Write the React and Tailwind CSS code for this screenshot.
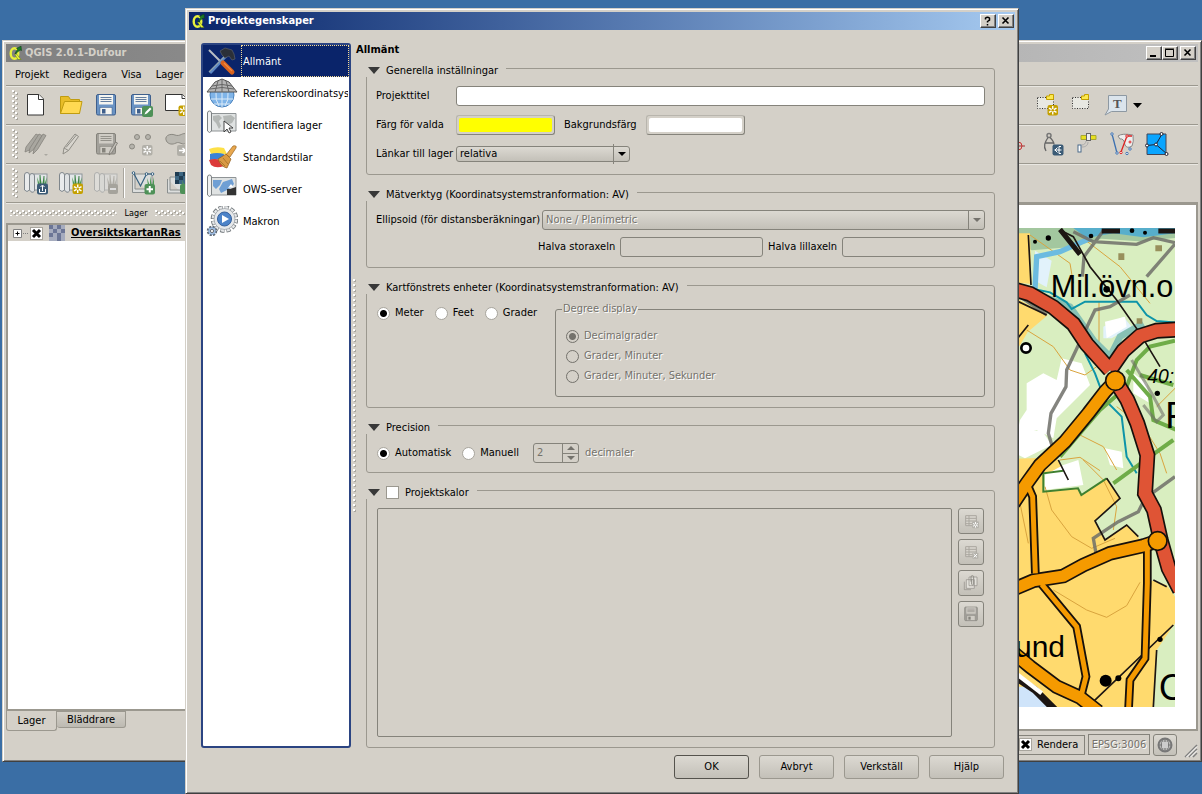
import React from 'react';
import clsx from 'clsx';

const face = 'border rounded-[3px] bg-linear-to-b from-[#dcd9d2] to-[#c3c0b8]';
const raised = 'border border-[#85837b] rounded-[3px] bg-linear-to-b from-[#dcd9d2] to-[#c3c0b8]';
const etched = 'text-[#74726c] [text-shadow:1px_1px_0_#fff]';

/* ---------- small shared pieces ---------- */

const Dots = ({ id, className, w = 6 }) => (
  <svg className={className} aria-hidden="true">
    <defs>
      <pattern id={id} width={w} height="5" patternUnits="userSpaceOnUse">
        <rect x="1" y="1" width="2" height="2" fill="#a8a59d" />
        <rect x="0" y="0" width="2" height="2" fill="#fff" />
        {w > 4 && <rect x="4" y="3" width="2" height="2" fill="#a8a59d" />}
        {w > 4 && <rect x="3" y="2" width="2" height="2" fill="#fff" />}
      </pattern>
    </defs>
    <rect width="100%" height="100%" fill={`url(#${id})`} />
  </svg>
);

const QgisLogo = () => (
  <svg width="13" height="14" viewBox="0 0 13 14" className="shrink-0" aria-hidden="true">
    <ellipse cx="5.500" cy="7.500" rx="3.800" ry="5.200" fill="none" stroke="#e8f03c" strokeWidth="2.400" />
    <path d="M5.500 8l2 0 4.500 5.500H9z" fill="#e8f03c" stroke="#5b7a10" strokeWidth=".5" />
    <path d="M6 8C7 5 8 4 9 3L7.500 2.500 12 0l.5 4.500L11 4C9.500 5 8 7 6 8z" fill="#1c7a28" stroke="#0a3a10" strokeWidth=".5" />
  </svg>
);

const CaptionButton = ({ label, children }) => (
  <button
    type="button"
    aria-label={label}
    className="flex h-[14px] w-4 items-center justify-center border border-t-white border-l-white border-r-[#404040] border-b-[#404040] bg-[#d4d0c8] shadow-[inset_-1px_-1px_0_#808080]"
  >
    <svg width="10" height="10" viewBox="0 0 10 10" fill="none" stroke="#000">
      {children}
    </svg>
  </button>
);

const Triangle = ({ color = '#000', w = 9, h = 5, up }) => (
  <svg width={w} height={h} viewBox="0 0 10 5" preserveAspectRatio="none" className="shrink-0" aria-hidden="true">
    <path d={up ? 'M0 5h10L5 0z' : 'M0 0h10L5 5z'} fill={color} />
  </svg>
);

/* ---------- toolbar icons ---------- */

const Icon = ({ children, size = 24 }) => (
  <svg width={size} height={size} viewBox="0 0 24 24" className="shrink-0" fill="none" aria-hidden="true">
    {children}
  </svg>
);

const StarBadge = ({ x = 12, y = 12, fill = '#c4a000', stroke = '#fff' }) => (
  <g transform={`translate(${x} ${y})`}>
    <rect x=".5" y=".5" width="10.500" height="10.500" rx="2" fill={fill} />
    <path d="M5.750 1.500v8.500M2 3.600l7.500 4.300M2 7.900l7.500-4.300" stroke={stroke} strokeWidth="1.400" />
    <circle cx="5.750" cy="5.750" r="1.300" fill={fill} />
  </g>
);

const Floppy = ({ body = '#6a93c4', edge = '#3f5f8c', label = '#f4f4f0' }) => (
  <g>
    <rect x="2.500" y="1.500" width="19" height="20.500" rx="1.500" fill={body} stroke={edge} />
    <rect x="5" y="2" width="14" height="9.500" fill={label} />
    <path d="M6.500 4.500h11M6.500 6.500h11M6.500 8.500h11" stroke={edge} strokeWidth=".8" />
    <rect x="6" y="14.500" width="12" height="7" fill={label} stroke={edge} strokeWidth=".5" />
    <rect x="8" y="16" width="3.500" height="4.500" fill={edge} />
  </g>
);

const MapRoll = ({ dim }) => (
  <g opacity={dim ? 0.45 : 1}>
    <rect x="10" y="3" width="13" height="16" fill="#e3e6e8" stroke="#8d949a" />
    <path d="M.5 19V4q0-2.500 2.500-2.500T5.500 4v15q-2.500 3-5 0z" fill="#e9ebec" stroke="#7f868c" />
    <path d="M5.500 19V5q0-2.500 2.500-2.500T10.500 5v15q-2.500 3-5-1z" fill="#dfe2e4" stroke="#7f868c" />
    <path d="M14 14l-1-8 3 8 0-10 2 10 2-9 0 9 3-8-1 8z" fill={dim ? '#8c8c86' : '#4e9a56'} />
    <path d="M16 14l0-10M20 14l0-9" stroke={dim ? '#77776f' : '#1f6b2c'} strokeWidth=".8" />
  </g>
);

const Page = ({ d = 'M3.500 1.500h11.500l4.500 4.500v16h-16z', fold = 'M14.500 1.500V6.500h5' }) => (
  <g fill="#fff" stroke="#333">
    <path d={d} />
    <path d={fold} />
  </g>
);

const fileIcons = [
  ['Nytt projekt', <Page key="i" />],
  [
    'Öppna projekt',
    <g key="i" stroke="#c09c10">
      <path d="M1.500 20.500v-17h8l2 3h9v14z" fill="#e8bd28" />
      <path d="M1.500 20.500l4-12h17.500l-2.500 12z" fill="#ffd952" />
    </g>,
  ],
  ['Spara projekt', <Floppy key="i" />],
  [
    'Spara projekt som',
    <g key="i">
      <Floppy />
      <rect x="13" y="13" width="11" height="11" rx="2" fill="#4e9158" />
      <path d="M15.500 21.500l1-2.500 4.500-4.500 1.500 1.500-4.500 4.500z" fill="#fff" />
    </g>,
  ],
  [
    'Ny utskrift',
    <g key="i">
      <Page d="M1.500 1.500h17l3.500 4v12h-20.500z" fold="M18 1.500v4h4" />
      <StarBadge x={14} />
    </g>,
  ],
];

const editIcons = [
  [
    'Aktuella ändringar',
    <g key="i" fill="#a9a7a0" stroke="#85837c" strokeWidth=".8">
      <path d="M1 20l1-5L12 2l3 1.500-8.500 14z" />
      <path d="M5 21l1-5L15 2l3 1.500-8.500 14z" />
      <path d="M9 22l1-5L19 2l3 1.500-8.500 14z" />
      <path d="M20 22h4l-2 2z" stroke="none" />
    </g>,
  ],
  [
    'Växla redigering',
    <g key="i" fill="#d8d5ce" stroke="#8f8d86">
      <path d="M4 22l1-6L16 2l3.500 2.500-10 14z" />
      <path d="M5 16l4.500 2.500M7 15.500L17.500 3" />
    </g>,
  ],
  [
    'Spara lagerändringar',
    <g key="i">
      <Floppy body="#a3a19b" edge="#85837c" label="#cfccc5" />
      <path d="M15 23l1-4 5.500-9 2 1-5.500 9.500z" fill="#c2bfb8" stroke="#77756e" strokeWidth=".8" />
    </g>,
  ],
  [
    'Lägg till objekt',
    <g key="i" stroke="#8a8881" fill="#b5b3ac">
      <circle cx="8" cy="5" r="2.500" />
      <circle cx="19" cy="5" r="2.500" />
      <circle cx="3" cy="14.500" r="2.500" />
      <g stroke="none">
        <StarBadge x={12.500} y={12.500} fill="#b1afa8" />
      </g>
    </g>,
  ],
  [
    'Flytta objekt',
    <g key="i">
      <path d="M3 10C-1 4 6 1 11 3s8-3 11-1v9c-4 3-6-2-10 0s-7 1-9-1z" fill="#bab8b1" stroke="#8a8881" />
      <rect x="13" y="13" width="11" height="11" rx="2" fill="#b1afa8" />
      <path d="M15 18.500h6M18.500 16l3 2.500-3 2.500" stroke="#fff" strokeWidth="1.500" />
    </g>,
  ],
];

const layerIcons = [
  [
    'Öppna GRASS-mapset',
    <g key="i">
      <MapRoll />
      <rect x="13" y="12.500" width="11" height="11" rx="2" fill="#3b5b76" />
      <path d="M18.500 20v-5.500M16.500 16l2-2 2 2M15.500 18v3.500h6V18" stroke="#fff" />
    </g>,
  ],
  [
    'Nytt GRASS-mapset',
    <g key="i">
      <MapRoll />
      <StarBadge x={13} />
    </g>,
  ],
  [
    'Stäng GRASS-mapset',
    <g key="i">
      <MapRoll dim />
      <rect x="14" y="13" width="10" height="10" rx="2" fill="#a5a39c" />
      <path d="M16 18h6" stroke="#ddd" strokeWidth="2" />
    </g>,
  ],
];

const vectorIcons = [
  [
    'Lägg till GRASS-vektorlager',
    <g key="i">
      <path d="M1.500 4v17.500h16M4 3h17v15H4z" fill="#dcdedd" stroke="#8a8f8f" />
      <path d="M17 15l-1-8 3 8 0-10 2 10 2-9 0 9z" fill="#4e9a56" />
      <path d="M2.500 2l7 13 6-12h6" stroke="#356080" strokeWidth="1.200" />
      <g fill="#fff" stroke="#356080">
        <circle cx="2.500" cy="2" r="1.300" />
        <circle cx="15.500" cy="3" r="1.300" />
        <circle cx="21.500" cy="3" r="1.300" />
      </g>
      <rect x="13.500" y="13" width="10.500" height="10.500" rx="2" fill="#4e9158" />
      <path d="M15.500 18.250h6.500M18.750 15v6.500" stroke="#fff" strokeWidth="2" />
    </g>,
  ],
  [
    'Lägg till GRASS-rasterlager',
    <g key="i">
      <path d="M1.500 8v14h14M4 6h15v13H4z" fill="#dcdedd" stroke="#8a8f8f" />
      <path d="M9 1h12v12H9z" fill="#3d6783" />
      <path d="M9 1h4v4H9zM17 1h4v4h-4zM13 5h4v4h-4zM9 9h4v4H9z" fill="#1f3c52" />
      <path d="M17 15l-1-6 3 6 0-8 3 8z" fill="#4e9a56" />
      <rect x="14" y="13" width="10" height="10" rx="2" fill="#4e9158" />
    </g>,
  ],
];

const Bookmark = () => (
  <g>
    <rect x="2.500" y="4.500" width="16" height="11" fill="#e8e8e2" />
    <rect x="2.500" y="4.500" width="16" height="11" stroke="#333" strokeDasharray="1 1.500" />
    <path d="M11.500 6.500V3h3V1.500h4V6.500z" fill="#fce94f" stroke="#c4a000" />
  </g>
);

const noteIcons = [
  [
    'Nytt bokmärke',
    <g key="i">
      <Bookmark />
      <StarBadge x={12} y={11.500} />
    </g>,
  ],
  ['Visa bokmärken', <Bookmark key="i" />],
];

const pluginIcons = [
  [
    'Koordinatfångst',
    <g key="i">
      <circle cx="13" cy="14" r="4" stroke="#c33" />
      <path d="M13 7v14M6 14h14" stroke="#a33" />
    </g>,
  ],
  [
    'Mätning',
    <g key="i">
      <circle cx="9" cy="3.500" r="2" stroke="#777" strokeWidth="1.500" />
      <path d="M8 5.500C5 10 3 14 6 19M10 5.500c3 3 4 5 4 7M5.500 11h8" stroke="#666" strokeWidth="1.300" />
      <rect x="12.500" y="12.500" width="11" height="11" rx="2" fill="#3b5b76" />
      <path d="M14.500 18h7M17.500 15.500L15 18l2.500 2.500M21 14.500h-2v7h2" stroke="#fff" />
    </g>,
  ],
  [
    'GPS-verktyg',
    <g key="i">
      <path d="M6 3.500h5.500v4H6zM15.500 3.500H21v4h-5.500z" fill="#e8e020" stroke="#a8a830" />
      <rect x="11.500" y="1.500" width="4" height="7" fill="#eee" stroke="#666" />
      <path d="M7 13c2 0 4-2 4-4M7 15c4 0 6-2 6-5" stroke="#aaa" />
      <rect x="3" y="13" width="3" height="7" fill="#fff" stroke="#4b6a8a" />
    </g>,
  ],
  [
    'Topologikontroll',
    <g key="i">
      <path d="M8 4q4-3 15-1 1 7-1 11-5 3-7-1-1-7-5-6z" fill="#eee" stroke="#888" />
      <path d="M2 2l5 19" stroke="#3c70b0" strokeWidth="1.300" />
      <path d="M11 20l6-16h5" stroke="#d22" strokeWidth="1.300" />
      <g fill="#fff" stroke="#3c70b0">
        <circle cx="2" cy="2" r="1.200" />
        <circle cx="7" cy="21" r="1.200" />
        <circle cx="17" cy="21.500" r="1.200" />
        <circle cx="20" cy="17" r="1.200" />
      </g>
      <g fill="#fff" stroke="#d22">
        <circle cx="11" cy="20.500" r="1.200" />
        <circle cx="17" cy="4" r="1.200" />
        <circle cx="20" cy="10" r="1" />
      </g>
    </g>,
  ],
  [
    'Vägkarta',
    <g key="i">
      <path d="M2 2h19v20.500H2z" fill="#0aa5ff" stroke="#445" />
      <path d="M2 13.500l9-1L17 2M11 12.500l11 9.500" stroke="#223" />
      <g fill="#fff" stroke="#223">
        <circle cx="2" cy="13.500" r="1.500" />
        <circle cx="11" cy="12.500" r="1.500" />
        <circle cx="16.500" cy="2" r="1.500" />
        <circle cx="21.500" cy="22" r="1.500" />
      </g>
    </g>,
  ],
];

const ToolGroup = ({ items }) => (
  <div className="flex">
    {items.map(([name, art]) => (
      <button key={name} type="button" aria-label={name} className="flex h-8 w-[35px] items-center justify-center">
        <Icon>{art}</Icon>
      </button>
    ))}
  </div>
);

const Toolbar = ({ id, left, right, rightPad }) => (
  <div className="flex h-[39px] items-center justify-between border-b border-[#9b988f] shadow-[0_1px_0_#e9e7e2]">
    <div className="flex items-center pl-[6px]">
      <Dots id={id} className="h-[30px] w-[6px]" />
      {left}
    </div>
    <div className={clsx('flex items-center', rightPad)}>{right}</div>
  </div>
);

/* ---------- map canvas ---------- */

const roads = {
  red: [
    'M0 205L60 222 130 262 190 312 230 372 300 450',
    'M300 450L340 392 390 348 440 332 510 328',
    'M316 482L352 540 382 610 412 705 405 820 432 870 452 960 476 1045 510 1110',
  ],
  orange: [
    'M316 482L285 515 235 580 165 665 90 735 50 790 10 850',
    'M0 1112L70 1082 160 1068 220 1035 300 1000 400 977 443 963',
    'M0 1290L60 1340 140 1400 210 1432 265 1475',
  ],
  lane: [
    'M55 800L68 830 76 1060',
    'M95 1093L200 1220 228 1370 214 1425',
    'M412 980V1090L405 1315 360 1380 355 1480',
  ],
};

const MapArt = () => (
  <svg width="160" height="479" viewBox="15 24 480 1437" className="shrink-0" role="img" aria-label="Karta">
    <rect x="15" y="24" width="480" height="1437" fill="#d9eec0" />
    <path d="M15 24h480v30l-110 10-110-8-90 25-120 10-50-30z" fill="#a3c79f" />
    <path d="M190 24h305v16l-95 12-90-12-80 14z" fill="#57aecb" />
    <path d="M75 92l50 30-15 80-35-20zM280 320l60-30 25 30-60 35-25 0z" fill="#e2f2fb" />
    <path d="M15 40h45l4 152-49-5zM15 232l98 54-60 50-23 40-15 10zM15 716l125-4 20 40-60 8 2 53 103-8 10 20 75-50 40 60-75 68 30 57 65-45 35 35 35 130 50 15 25 35v80l-55 80-10 171H15z" fill="#ffda6e" />
    <path d="M50 490l50-30 40 20 15-65 60 15 25 65-60 60-40 40-10 60-50-25-60 20 10-50 20-30zM15 640l80-10 30 45-80 40-30-15zM285 305l60-15 5 30-60 35zM105 765l55-30 45-15 15 75-115 15zM285 685l50 10 5 50-40-10zM370 460l40 30 10 60-50-30z" fill="#fff" />
    <path d="M15 1400l60 0 50 61H15z" fill="#cfe4fa" />
    {/* contour lines */}
    <g fill="none" stroke="#d9a43e" strokeWidth="3">
      <path d="M60 45L180 130 190 190M200 40L330 140 420 250M267 245v120M50 330L130 380 180 450 225 465 260 440M200 640l80 40 40 70M150 720l60-8 60 40M105 800l20 70 60 80 60 35 70-30M320 560l80 60 50 80 20 60M220 720l60 60 40 80-10 70M130 1110l100 60 60 22 60-35 40-70M440 560l60-60M30 850l25 120" />
    </g>
    {/* streams and water edges */}
    <g fill="none">
      <path d="M75 210L80 110 150 95 240 55" stroke="#6cbbe0" strokeWidth="16" />
      <path d="M100 230L180 260 250 360 300 410 330 350 400 310" stroke="#72b5b0" strokeWidth="20" opacity=".8" />
      <path d="M60 205l60 12 50 30 15 20 40-22h155l30 40 30 18 60 5M225 400l30 60 30 80 50 50 15 120 30 50" stroke="#0d94a8" strokeWidth="6" />
      <path d="M495 362L420 380 380 420 350 500 270 570 150 710M350 450l70 80 10 70 70 30M490 660l-70 50-110 80M390 465l100 30" stroke="#6fac48" strokeWidth="12" />
      <path d="M160 752L100 760v55l104-10 10 20 76-50" stroke="#3f8030" strokeWidth="6" />
    </g>
    {/* tracks */}
    <g fill="none" stroke="#6f6f69">
      <path d="M190 35l60 30 130 8 50-20 65 15M282 30l-60 80-5 60M495 72L410 170M30 230l80 55M360 225l-60 35-45 10-85 180-2 50-45 80-8 60 12 40M495 770l-90 65-20 40-60 30-75 50 8 45" strokeWidth="10" opacity=".85" />
      <path d="M365 420l60 100 35 65-20 20-40-50" strokeWidth="9" opacity=".6" />
    </g>
    <g fill="none" stroke="#1c1512" strokeWidth="5">
      <path d="M150 30l40 20 50 90 80 100 70 100 60 100M55 45l8 150M110 285L15 240M15 365l40-50M290 775l40 60-75 68 30 57 65-45 35 35M440 1290l-10 171M250 1445l240-230M145 720l30 60M430 1080l40 20" />
      <path d="M150 28l60 75M275 33h55M445 33h50" strokeWidth="15" />
      <path d="M15 1370l60 40 60 60" strokeWidth="22" />
    </g>
    <path d="M15 1358l80 62" stroke="#fff" strokeWidth="13" />
    <g fill="#000">
      <circle cx="115" cy="54" r="8" />
      <circle cx="243" cy="48" r="7" />
      <circle cx="75" cy="65" r="6" />
      <circle cx="366" cy="32" r="7" />
      <circle cx="405" cy="38" r="6" />
      <circle cx="290" cy="208" r="10" />
      <circle cx="442" cy="520" r="8" />
      <circle cx="287" cy="1382" r="18" />
      <circle cx="325" cy="1375" r="9" />
      <circle cx="450" cy="1258" r="8" />
    </g>
    <path d="M325 100h18v20h-18zM436 76h20v18h-20zM380 295h17v16h-17z" fill="#98905c" />
    {/* roads: dark casing first, fill on top */}
    <g fill="none" stroke="#16100c">
      {roads.lane.map((d) => <path key={d} d={d} strokeWidth="26" />)}
      {roads.orange.map((d) => <path key={d} d={d} strokeWidth="44" />)}
      {roads.red.map((d) => <path key={d} d={d} strokeWidth="48" />)}
    </g>
    <g fill="none">
      {roads.lane.map((d) => <path key={d} d={d} strokeWidth="15" stroke="#f59a00" />)}
      {roads.orange.map((d) => <path key={d} d={d} strokeWidth="34" stroke="#f59a00" />)}
      {roads.red.map((d) => <path key={d} d={d} strokeWidth="38" stroke="#df5435" />)}
    </g>
    <g fill="#f59a00" stroke="#16100c" strokeWidth="5">
      <circle cx="316" cy="482" r="29" />
      <circle cx="443" cy="963" r="28" />
    </g>
    <circle cx="48" cy="384" r="14" fill="#fff" stroke="#000" strokeWidth="8" />
    <g fill="#000" fontFamily='"Liberation Sans", sans-serif'>
      <text x="122" y="232" fontSize="92">Mil.övn.o</text>
      <text x="412" y="490" fontSize="58" fontStyle="italic">40:</text>
      <text x="466" y="625" fontSize="108">F</text>
      <text x="15" y="1312" fontSize="90">und</text>
      <text x="447" y="1440" fontSize="108">O</text>
    </g>
  </svg>
);

/* ---------- main window ---------- */

const CrossBox = () => (
  <span className="relative flex h-[13px] w-[13px] shrink-0">
    <input type="checkbox" defaultChecked className="h-[13px] w-[13px] appearance-none border border-[#a8a59d] bg-white" />
    <svg viewBox="0 0 13 13" className="pointer-events-none absolute inset-0" aria-hidden="true">
      <path d="M3 3l7 7M10 3l-7 7" stroke="#000" strokeWidth="3" />
    </svg>
  </span>
);

const MainWindow = () => (
  <section className="absolute top-10 right-0 bottom-8 left-[2px] flex flex-col border border-t-[#d4d0c8] border-l-[#d4d0c8] border-r-[#404040] border-b-[#404040] bg-[#d4d0c8] p-[3px] shadow-[inset_1px_1px_0_#fff,inset_-1px_-1px_0_#808080]">
    <header className="flex h-[18px] items-center bg-linear-to-r from-[#808080] to-[#c0c0c0] pr-[2px] pl-[3px]">
      <QgisLogo />
      <h1 className="ml-[3px] flex-1 font-bold text-[#d4d0c8]">QGIS 2.0.1-Dufour</h1>
      <CaptionButton label="Minimera"><path d="M1 8h6" strokeWidth="2" /></CaptionButton>
      <CaptionButton label="Maximera"><path d="M.5 1.500h8v7h-8zM0 1h9" /></CaptionButton>
      <span className="w-[2px]" />
      <CaptionButton label="Stäng"><path d="M1.500 1.500l6 6M7.500 1.500l-6 6" strokeWidth="1.600" /></CaptionButton>
    </header>

    <nav className="flex h-6 items-center gap-[14px] border-b border-[#9b988f] pt-[3px] pl-[9px] shadow-[0_1px_0_#e9e7e2]">
      {['Projekt', 'Redigera', 'Visa', 'Lager'].map((m) => (
        <button key={m} type="button">{m}</button>
      ))}
    </nav>

    <Toolbar
      id="grip-file"
      left={<ToolGroup items={fileIcons} />}
      rightPad="pr-14"
      right={
        <>
          <ToolGroup items={noteIcons} />
          <button type="button" aria-label="Textanteckning" className="ml-1 flex items-center gap-1">
            <svg width="26" height="24" viewBox="0 0 26 24" aria-hidden="true">
              <path d="M5.500 2.500h18v16h-15L2 22l3.500-6z" fill="#dbe4ec" stroke="#8d98a2" />
              <text x="10" y="15" fontSize="13" fontWeight="bold" fontFamily='"Liberation Serif", serif' fill="#555">T</text>
            </svg>
            <Triangle />
          </button>
        </>
      }
    />
    <Toolbar id="grip-edit" left={<ToolGroup items={editIcons} />} rightPad="pr-6" right={<ToolGroup items={pluginIcons} />} />
    <Toolbar
      id="grip-layer"
      left={
        <>
          <ToolGroup items={layerIcons} />
          <span className="h-[30px] w-[2px] border-l border-[#a8a59d] bg-white" />
          <ToolGroup items={vectorIcons} />
        </>
      }
    />

    <div className="flex min-h-0 flex-1">
      <aside className="flex w-[260px] shrink-0 flex-col">
        <div className="flex h-5 items-center gap-2 px-1 text-[9px]">
          <Dots id="dock-l" className="h-[6px] flex-1" />
          <h2>Lager</h2>
          <Dots id="dock-r" className="h-[6px] flex-1" />
        </div>
        <div className="min-h-0 flex-1 border-2 border-[#9b988f] bg-white">
          <label className="flex h-4 items-center bg-[#d4d0c8] pl-1">
            <svg width="18" height="11" viewBox="0 0 18 11" fill="none" className="shrink-0" aria-hidden="true">
              <path d="M1.500 1.500h8v8h-8z" fill="#fff" stroke="#808080" />
              <path d="M3.500 5.500h4M5.500 3.500v4" stroke="#000" />
              <path d="M11 5.500h6" stroke="#808080" strokeDasharray="1 1" />
            </svg>
            <CrossBox />
            <svg width="16" height="16" viewBox="0 0 4 4" className="mx-[6px] shrink-0" shapeRendering="crispEdges" aria-hidden="true">
              <path d="M0 0h4v4H0z" fill="#a6acbe" />
              <path d="M0 0h1v1H0zM1 1h1v1H1zM2 0h1v1H2zM0 2h1v1H0zM3 1h1v1H3zM2 2h1v2H2z" fill="#6c7696" />
            </svg>
            <span className="font-bold underline">OversiktskartanRas</span>
          </label>
        </div>
        <div className="flex h-5 items-start">
          <button type="button" className="h-5 w-[51px] rounded-b-[3px] border border-t-0 border-[#9b988f]">Lager</button>
          <button type="button" className="h-[17px] w-[69px] rounded-b-[3px] border border-l-0 border-[#9b988f] bg-linear-to-b from-[#d4d0c8] to-[#bdbab2]">Bläddrare</button>
        </div>
      </aside>
      <div className="ml-1 flex min-h-0 flex-1 justify-end border-2 border-[#9b988f] bg-white pt-[23px] pr-[21px]">
        <MapArt />
      </div>
    </div>

    <footer className="flex h-[27px] shrink-0 items-center justify-end gap-[3px]">
      <label className="flex h-5 w-[70px] items-center gap-[5px] border border-[#85837b] pl-[3px]">
        <CrossBox />
        Rendera
      </label>
      <span className={clsx('flex h-[21px] w-[62px] items-center justify-center border border-[#85837b]', etched)}>EPSG:3006</span>
      <button type="button" aria-label="Projektion" className={clsx('flex h-[22px] w-6 items-center justify-center', raised)}>
        <svg width="16" height="16" viewBox="0 0 16 16" fill="#b8b8b6" stroke="#777" aria-hidden="true">
          <circle cx="8" cy="8" r="6.500" strokeWidth="2" />
          <path d="M8 1v14M1 8h14" fill="none" />
          <ellipse cx="8" cy="8" rx="3.500" ry="6.500" fill="none" />
          <path d="M5 5h6v6H5z" fill="#ccc" stroke="none" />
        </svg>
      </button>
      <svg width="14" height="14" viewBox="0 0 14 14" className="mt-3 ml-1" stroke="#808080" aria-hidden="true">
        <path d="M1 13L13 1M5 13l8-8M9 13l4-4" strokeWidth="1.500" />
        <path d="M2.500 13L13 2.500M6.500 13L13 6.500" stroke="#fff" />
      </svg>
    </footer>
  </section>
);

/* ---------- dialog ---------- */

const Scroll = ({ children }) => (
  <g>
    <path d="M4 3.500h26v17.500H4z" fill="#dfe2e2" stroke="#8f9496" />
    <path d="M1.500 3q0-2 2-2t2 2v18q-2 3-4 0z" fill="#f0f1f1" stroke="#7d8284" />
    {children}
  </g>
);

const pages = [
  [
    'Allmänt',
    <g key="i" fill="none">
      <path d="M3 4l14 14" stroke="#b9bfc4" strokeWidth="2" />
      <path d="M4 27l16-17" stroke="#5b86c4" strokeWidth="3" />
      <path d="M3 26L19 10" stroke="#8fa3ae" strokeWidth="1.200" />
      <path d="M17 17l9 9" stroke="#d9631e" strokeWidth="5" strokeLinecap="round" />
      <path d="M18 17l8 8" stroke="#f08a40" strokeWidth="1.200" />
      <path d="M14 5l5-3 7 2 2 4 1 5-3 1-3-4-4 2-3-3z" fill="#2b3038" stroke="#5a5f68" strokeWidth=".7" />
    </g>,
  ],
  [
    'Referenskoordinatsys',
    <g key="i">
      <circle cx="16" cy="17" r="12" fill="#7fb4e8" stroke="#4c83bd" />
      <path d="M16 5v24M5 21h22M8 26h16M10 15q-1 7 3 13M22 15q1 7-3 13" fill="none" stroke="#dcebf8" />
      <path d="M9 4l7-3 7 3 8 10H1z" fill="#b6b6b6" stroke="#555" />
      <path d="M6 8q10-3 20 0M4 11q12-3 24 0M12 3l-3 11M20 3l3 11M16 1v13" fill="none" stroke="#666" />
    </g>,
  ],
  [
    'Identifiera lager',
    <Scroll key="i">
      <path d="M7 6l6-1 3 3-3 3 2 5-2 3-3-6-3-3zM17 6l8-1 4 3-3 5-5 2-3-4z" fill="#b4b8b6" />
      <path d="M18 11v11l3-3 2 4 2-1-2-4h4z" fill="#fff" stroke="#333" strokeWidth=".9" />
    </Scroll>,
  ],
  [
    'Standardstilar',
    <g key="i">
      <path d="M3 7q7-3 15-1l3 6H5z" fill="#fde047" />
      <path d="M4 12q7-2 14 0l-1 5-13 1z" fill="#3b82d6" />
      <path d="M3 18q6-2 11 0l4 6q-8 3-13-1z" fill="#dc3a3a" />
      <path d="M20 13l7-9q4-1 3 2l-6 9z" fill="#e8a74e" stroke="#9a6420" strokeWidth=".7" />
      <path d="M12 17l8-5 5 5-4 9q-6-1-9-9z" fill="#d99a44" stroke="#8f5c1c" strokeWidth=".7" />
      <path d="M14 19l5 5M17 16l5 6" stroke="#8f5c1c" strokeWidth=".6" />
    </g>,
  ],
  [
    'OWS-server',
    <Scroll key="i">
      <path d="M7 6h9l-2 5-4 4-3-3zM17 8l9-3 2 5-5 5-8 4-2-4z" fill="#6f9fd4" />
      <path d="M21 21v-6h3l6-2v8z" fill="#333" />
      <path d="M22 14l3-4 2 3z" fill="#fff" />
    </Scroll>,
  ],
  [
    'Makron',
    <g key="i">
      <circle cx="18.500" cy="13" r="11.500" fill="none" stroke="#6d7377" strokeWidth="4.500" strokeDasharray="4 2" />
      <circle cx="18.500" cy="13" r="11.500" fill="none" stroke="#e6e8ea" strokeWidth="2.800" strokeDasharray="3 3" strokeDashoffset="-.5" />
      <circle cx="18.500" cy="13" r="10.500" fill="#e6e8ea" stroke="#8b9195" strokeWidth=".6" />
      <circle cx="18.500" cy="13" r="7" fill="#4d83c8" stroke="#35609c" />
      <path d="M16 9l7 4-7 4z" fill="#fff" />
      <circle cx="6" cy="25" r="4" fill="#9dbbe0" stroke="#5f6a78" strokeWidth="2.500" strokeDasharray="2 1.140" />
      <circle cx="6" cy="25" r="3.600" fill="#9dbbe0" />
      <circle cx="6" cy="25" r="1.600" fill="#fff" stroke="#555" strokeWidth=".8" />
    </g>,
  ],
];

const Group = ({ title, children, className, checkable }) => (
  <fieldset className={clsx('min-w-0 rounded-[3px] border border-[#9b988f]', className)}>
    <legend className="-ml-px flex h-[18px] items-center gap-[6px] bg-[#d4d0c8] pt-[5px] pr-2 pl-[2px]">
      <Triangle w={12} h={7} color="#383838" />
      {checkable ? (
        <label className="flex items-center gap-[6px]">
          <input type="checkbox" className="h-[13px] w-[13px] appearance-none border border-[#9b988f] bg-white" />
          {title}
        </label>
      ) : (
        title
      )}
    </legend>
    {children}
  </fieldset>
);

const Radio = ({ label, name, disabled, ...rest }) => (
  <label className={clsx('flex h-[14px] items-center gap-[5px]', disabled && etched)}>
    <input
      type="radio"
      name={name}
      disabled={disabled}
      className="h-[13px] w-[13px] appearance-none rounded-full border border-[#a8a59d] bg-white checked:bg-[radial-gradient(circle,#000_0_3px,#fff_4px)] disabled:border-[#74726c] disabled:bg-[#d4d0c8] disabled:checked:bg-[radial-gradient(circle,#74726c_0_3px,#d4d0c8_4px)]"
      {...rest}
    />
    {label}
  </label>
);

const Combo = ({ id, value, className, disabled }) => (
  <div className={clsx('relative flex h-5', className)}>
    <select id={id} disabled={disabled} className={clsx('w-full appearance-none pr-5 pl-[3px]', raised, disabled && 'opacity-100', disabled && etched)}>
      <option>{value}</option>
    </select>
    <span className="pointer-events-none absolute inset-y-0 right-0 flex w-[17px] items-center justify-center border-l border-[#85837b]">
      <Triangle w={8} h={4} color={disabled ? '#74726c' : '#000'} />
    </span>
  </div>
);

const ColorButton = ({ id, swatch }) => (
  <button id={id} type="button" className="h-5 w-[99px] rounded-[3px] border border-t-[#b8b5ad] border-l-[#b8b5ad] border-r-[#85837b] border-b-[#85837b] p-[2px]">
    <span className={clsx('block h-full rounded-[2px]', swatch)} />
  </button>
);

const scaleActions = [
  [
    'Lägg till skala',
    <g key="i" stroke="#aaa79f">
      <path d="M4 4h16v15H4zM9 4v15M4 8h16M4 12h16M4 16h16" fill="#d8d5ce" strokeWidth="1.500" />
      <g stroke="none"><StarBadge x={13} y={12} fill="#b5b3ac" /></g>
    </g>,
  ],
  [
    'Ta bort skala',
    <g key="i" stroke="#aaa79f">
      <path d="M4 4h16v15H4zM9 4v15M4 8h16M4 12h16M4 16h16" fill="#d8d5ce" strokeWidth="1.500" />
      <rect x="14" y="13" width="9" height="9" rx="1" fill="#b5b3ac" stroke="none" />
      <path d="M16 15l5 5M21 15l-5 5" stroke="#fff" strokeWidth="1.500" />
    </g>,
  ],
  [
    'Importera skalor',
    <g key="i" stroke="#8f8d86" fill="#e3e1db">
      <path d="M2 10v12h10" fill="none" />
      <path d="M5 7h12v13H5zM9 3h12v13H9z" />
      <path d="M12 10v-8q2-2 4 0v12q-2 2-3 0V6" fill="none" strokeWidth="1.500" />
    </g>,
  ],
  ['Exportera skalor', <Floppy key="i" body="#a3a19b" edge="#85837c" label="#cfccc5" />],
];

const GeneralPage = () => (
  <div className="flex min-w-0 flex-1 flex-col">
    <h3 className="h-4 font-bold">Allmänt</h3>
    <div className="flex min-h-0 flex-1 flex-col gap-2 pr-[9px] pl-[10px]">
      <Group title="Generella inställningar">
        <div className="grid grid-cols-[80px_1fr] gap-y-[9px] px-[9px] pt-[9px] pb-[10px] *:h-5 *:items-center">
          <label htmlFor="title" className="flex">Projekttitel</label>
          <input id="title" className="rounded-[3px] border border-[#85837b] bg-white px-1" />
          <label htmlFor="selcolor" className="flex">Färg för valda</label>
          <div className="flex">
            <ColorButton id="selcolor" swatch="bg-[#ffff00]" />
            <label htmlFor="bgcolor" className="w-[91px] pl-[9px]">Bakgrundsfärg</label>
            <ColorButton id="bgcolor" swatch="bg-white" />
          </div>
          <label htmlFor="paths" className="flex whitespace-nowrap">Länkar till lager</label>
          <Combo id="paths" value="relativa" className="w-[174px]" />
        </div>
      </Group>

      <Group title="Mätverktyg (Koordinatsystemstranformation: AV)">
        <div className="flex flex-col gap-[7px] px-[9px] pt-[9px] pb-[10px]">
          <div className="flex items-center">
            <label htmlFor="ellipsoid" className="w-[166px] whitespace-nowrap">Ellipsoid (för distansberäkningar)</label>
            <Combo id="ellipsoid" value="None / Planimetric" className="flex-1" disabled />
          </div>
          <div className="flex items-center gap-[5px] pl-[162px] whitespace-nowrap">
            <label htmlFor="major">Halva storaxeln</label>
            <input id="major" disabled className="h-5 min-w-0 flex-1 rounded-[3px] border border-[#85837b]" />
            <label htmlFor="minor">Halva lillaxeln</label>
            <input id="minor" disabled className="h-5 min-w-0 flex-1 rounded-[3px] border border-[#85837b]" />
          </div>
        </div>
      </Group>

      <Group title="Kartfönstrets enheter (Koordinatsystemstranformation: AV)">
        <div className="flex px-[9px] pt-2 pb-[10px]">
          <div className="flex w-[179px] gap-[11px] pt-1 pl-px">
            <Radio name="units" label="Meter" defaultChecked />
            <Radio name="units" label="Feet" />
            <Radio name="units" label="Grader" />
          </div>
          <fieldset className="flex h-[95px] min-w-0 flex-1 flex-col gap-[6px] rounded-[3px] border border-[#85837b] px-[10px] pt-[13px]">
            <legend className={clsx('-ml-1 h-[14px] px-px leading-[14px]', etched)}>Degree display</legend>
            <Radio name="degrees" label="Decimalgrader" disabled defaultChecked />
            <Radio name="degrees" label="Grader, Minuter" disabled />
            <Radio name="degrees" label="Grader, Minuter, Sekunder" disabled />
          </fieldset>
        </div>
      </Group>

      <Group title="Precision">
        <div className="flex items-center px-[10px] pt-[9px] pb-[9px]">
          <div className="flex w-[156px] gap-[11px]">
            <Radio name="precision" label="Automatisk" defaultChecked />
            <Radio name="precision" label="Manuell" />
          </div>
          <div className="mr-[6px] flex h-5 w-[46px] overflow-hidden rounded-[3px] border border-[#85837b]">
            <input id="decimals" type="text" defaultValue="2" disabled className="min-w-0 flex-1 pl-[3px] text-[#74726c]" />
            <div className="flex w-4 flex-col border-l border-[#85837b]">
              <button type="button" disabled aria-label="Öka" className="flex flex-1 items-center justify-center border-b border-[#85837b]">
                <Triangle up w={8} h={4} color="#74726c" />
              </button>
              <button type="button" disabled aria-label="Minska" className="flex flex-1 items-center justify-center">
                <Triangle w={8} h={4} color="#74726c" />
              </button>
            </div>
          </div>
          <label htmlFor="decimals" className={etched}>decimaler</label>
        </div>
      </Group>

      <Group title="Projektskalor" checkable className="flex min-h-0 flex-1 flex-col">
        <div className="flex min-h-0 flex-1 gap-[6px] px-[10px] pt-[9px] pb-[10px]">
          <div className="flex-1 rounded-[2px] border border-[#85837b]" />
          <div className="flex flex-col gap-[5px]">
            {scaleActions.map(([name, art]) => (
              <button key={name} type="button" disabled aria-label={name} className={clsx('flex h-[26px] w-[26px] items-center justify-center', raised)}>
                <Icon size={16}>{art}</Icon>
              </button>
            ))}
          </div>
        </div>
      </Group>
    </div>
  </div>
);

const ProjectDialog = () => (
  <section
    role="dialog"
    aria-label="Projektegenskaper"
    className="absolute top-2 right-[183px] bottom-0 left-[185px] flex flex-col border border-t-[#d4d0c8] border-l-[#d4d0c8] border-r-[#404040] border-b-[#404040] bg-[#d4d0c8] p-[3px] shadow-[inset_1px_1px_0_#fff,inset_-1px_-1px_0_#808080]"
  >
    <header className="flex h-[18px] shrink-0 items-center bg-linear-to-r from-[#0a246a] to-[#a6caf0] pr-px pl-[3px]">
      <QgisLogo />
      <h2 className="ml-[3px] flex-1 font-bold text-white">Projektegenskaper</h2>
      <CaptionButton label="Hjälp"><path d="M2.500 3.500V2q2-1.500 4 0v2l-2 1.500V6.500M4.500 8v1.500" strokeWidth="1.500" /></CaptionButton>
      <span className="w-[2px]" />
      <CaptionButton label="Stäng"><path d="M1.500 1.500l6 6M7.500 1.500l-6 6" strokeWidth="1.600" /></CaptionButton>
    </header>

    <div className="flex min-h-0 flex-1 pt-[13px] pr-[11px] pl-3">
      <nav className="flex w-[150px] shrink-0 flex-col rounded-[3px] border-2 border-[#2b4482] bg-white">
        {pages.map(([label, art], i) => (
          <button key={label} type="button" className={clsx('flex h-8 w-full items-center text-left', i === 0 && 'bg-[#0a246a] text-white')}>
            <svg width="32" height="30" viewBox="0 0 32 30" className="ml-[3px] shrink-0" aria-hidden="true">
              {art}
            </svg>
            <span className={clsx('ml-[3px] flex h-full min-w-0 flex-1 items-center overflow-hidden border pt-[2px] pl-px', i === 0 ? 'border-dotted border-[#f5db95]' : 'border-transparent')}>
              {label}
            </span>
          </button>
        ))}
      </nav>
      <div className="flex w-[5px] shrink-0 items-center pl-[2px]">
        <Dots id="splitter" w={4} className="h-[234px] w-[3px]" />
      </div>
      <GeneralPage />
    </div>

    <footer className="flex h-[42px] shrink-0 items-start justify-end gap-[10px] pt-[7px] pr-[11px]">
      {['OK', 'Avbryt', 'Verkställ', 'Hjälp'].map((b) => (
        <button key={b} type="button" className={clsx('h-6 w-[75px]', face, b === 'OK' ? 'border-[#55534d]' : 'border-[#9b988f]')}>
          {b}
        </button>
      ))}
    </footer>
  </section>
);

const App = () => (
  <main className="relative min-h-screen overflow-hidden bg-[#3a6ea5] font-['DejaVu_Sans_Condensed','DejaVu_Sans',sans-serif] text-[11px] leading-[14px] text-black">
    <MainWindow />
    <ProjectDialog />
  </main>
);

export default App;
